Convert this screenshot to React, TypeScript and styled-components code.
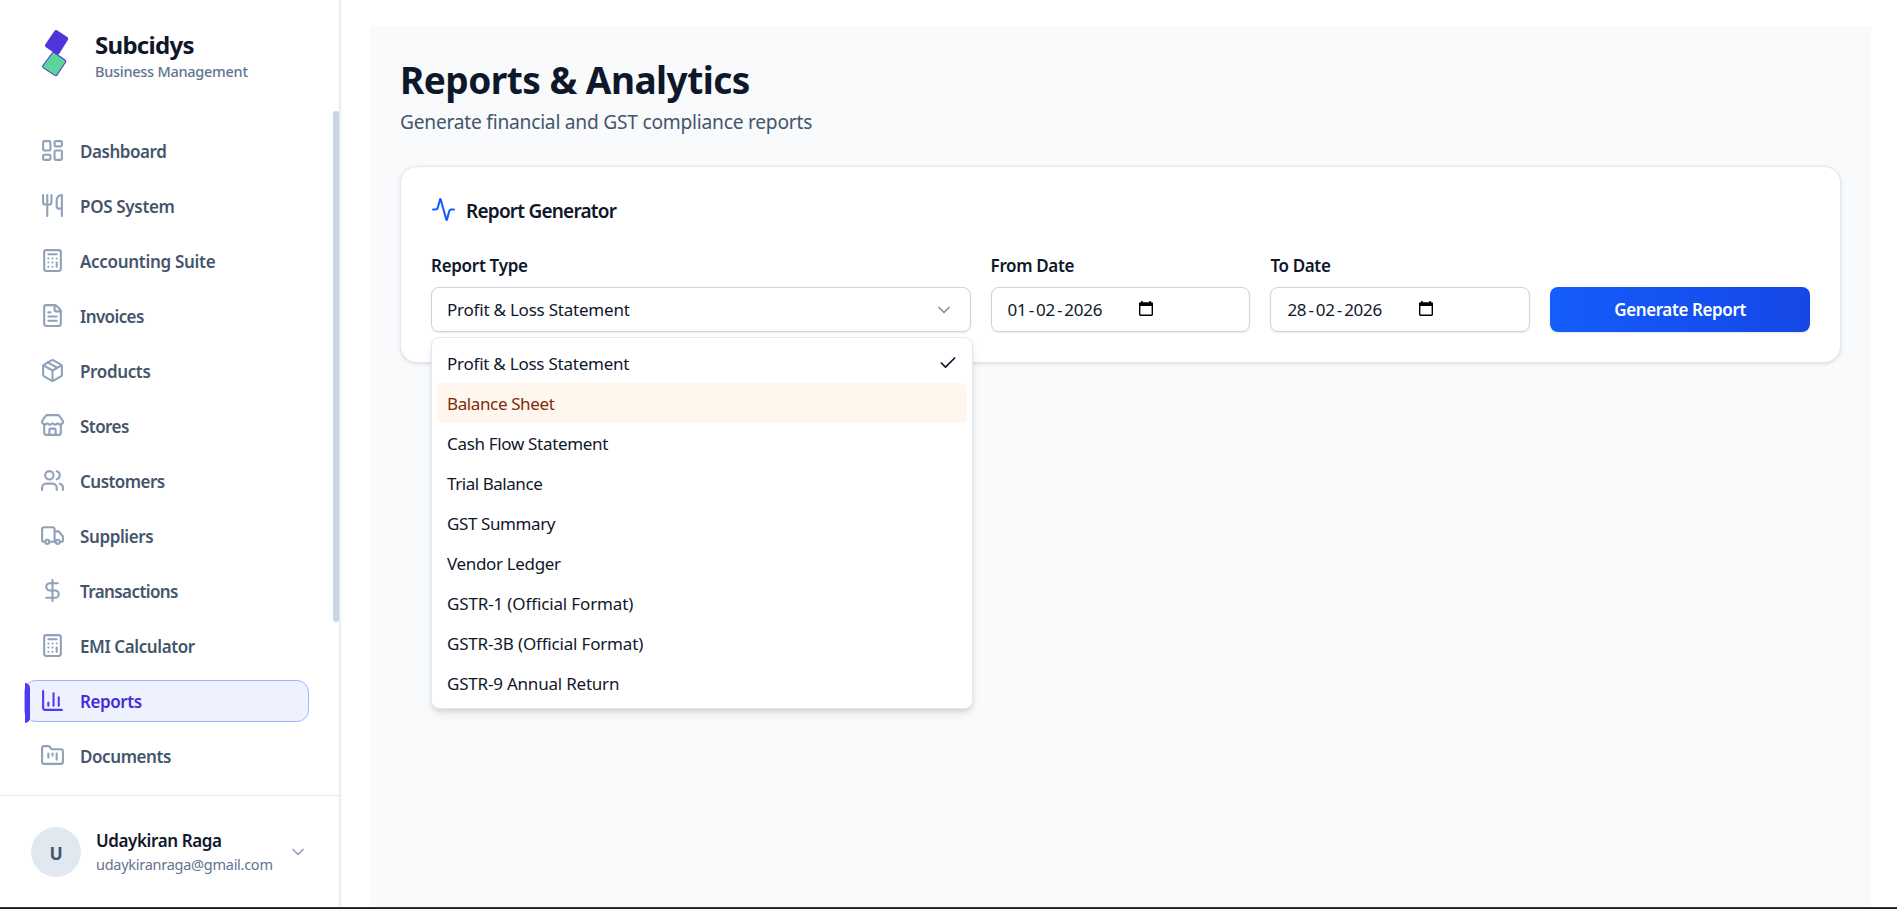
import React from 'react';
import styled, { createGlobalStyle, css } from 'styled-components';
import {
  Activity,
  Calculator,
  ChartColumn,
  Check,
  ChevronDown,
  DollarSign,
  FileText,
  FolderKanban,
  LayoutDashboard,
  Package,
  Store,
  Truck,
  Users,
  Utensils,
  type LucideIcon,
} from 'lucide-react';

const GlobalStyle = createGlobalStyle`
  *, *::before, *::after { box-sizing: border-box; }
  body {
    margin: 0;
    background: #fff;
    color: #0f172b;
    font-family: 'Noto Sans', 'Open Sans', sans-serif;
    overflow: hidden;
  }
  h1, h2, p { margin: 0; }
  button { font: inherit; }
`;

const Shell = styled.div`
  display: flex;
  flex-direction: column;
  height: 909px;
`;

const Body = styled.div`
  display: flex;
  flex: 1;
  min-height: 0;
`;

const BottomEdge = styled.div`
  height: 2px;
  background: #1b1a1f;
  border-top: 1px solid #38373c;
`;

/* Sidebar */

const Sidebar = styled.aside`
  width: 340px;
  flex: none;
  display: flex;
  flex-direction: column;
  background: #fff;
  border-right: 1px solid #e2e8f0;
  box-shadow: 0 1px 3px rgba(0, 0, 0, 0.12);
`;

const Brand = styled.header`
  display: flex;
  gap: 15px;
  height: 111px;
  padding: 28px 30px 0;
`;

const BrandName = styled.div`
  font-size: 24px;
  font-weight: 700;
  line-height: 33px;
  letter-spacing: -0.72px;
`;

const BrandTag = styled.div`
  font-size: 14.5px;
  font-weight: 540;
  line-height: 21px;
  letter-spacing: -0.27px;
  color: #62748e;
`;

const NavScroller = styled.div`
  display: flex;
  flex: 1;
  min-height: 0;
  justify-content: space-between;
`;

const Nav = styled.nav`
  display: flex;
  flex-direction: column;
  gap: 13px;
  width: 333px;
  padding: 19px 24px 0;
`;

const ScrollThumb = styled.div`
  width: 6px;
  height: 511px;
  border-radius: 3px;
  background: #cad5e2;
`;

const NavItem = styled.a<{ $active?: boolean }>`
  position: relative;
  display: flex;
  gap: 15px;
  height: 42px;
  padding: 7px 15px 0;
  border: 1px solid transparent;
  border-radius: 12px;
  color: #45556c;

  svg { color: #90a1b9; }

  ${(p) =>
    p.$active &&
    css`
      background: #eef2ff;
      border-color: #a3b3ff;
      color: #432dd7;

      svg { color: #4f39f6; }

      &::before {
        content: '';
        position: absolute;
        left: 0;
        top: 2px;
        width: 5px;
        height: 40px;
        border-radius: 0 5px 5px 0;
        background: #4f39f6;
      }
    `}
`;

const NavText = styled.span<{ $track: number }>`
  font-size: 17px;
  font-weight: 560;
  line-height: 27px;
  letter-spacing: ${(p) => p.$track - 0.16}px;
  white-space: nowrap;
`;

const Account = styled.footer`
  display: flex;
  align-items: center;
  height: 112px;
  padding: 1px 31px 0;
  border-top: 1px solid #e2e8f0;
`;

const Avatar = styled.div`
  display: flex;
  align-items: center;
  justify-content: center;
  width: 50px;
  height: 50px;
  padding-top: 2px;
  margin-right: 15px;
  border-radius: 50%;
  background: #e2e8f0;
  color: #45556c;
  font-size: 17.5px;
  font-weight: 700;
`;

const AccountText = styled.div`
  flex: 1;
  min-width: 0;
  white-space: nowrap;
`;

const AccountName = styled.div`
  font-size: 17px;
  font-weight: 560;
  line-height: 24px;
  letter-spacing: -0.4px;
`;

const AccountMail = styled.div`
  font-size: 14.5px;
  line-height: 22px;
  letter-spacing: -0.27px;
  color: #62748e;
`;

/* Main */

const Main = styled.main`
  flex: 1;
  margin: 26px 26px 0 30px;
  padding: 31px 30px 0;
  background: #f8fafc;
`;

const Title = styled.h1`
  font-size: 37px;
  font-weight: 700;
  line-height: 45px;
  letter-spacing: -0.52px;
`;

const Subtitle = styled.p`
  margin-top: 5px;
  font-size: 19.2px;
  line-height: 29px;
  letter-spacing: -0.24px;
  color: #45556c;
`;

const Card = styled.section`
  margin-top: 30px;
  height: 197px;
  padding: 30px;
  background: #fff;
  border: 1px solid #e2e8f0;
  border-radius: 17px;
  box-shadow: 0 1px 4px rgba(15, 23, 43, 0.1), 0 1px 2px -1px rgba(15, 23, 43, 0.1);
`;

const CardTitle = styled.h2`
  display: flex;
  gap: 10px;
  height: 25px;
  font-size: 19px;
  font-weight: 560;
  line-height: 28px;
  letter-spacing: -0.78px;

  svg { color: #155dfc; }
`;

const Form = styled.div`
  display: grid;
  grid-template-columns: repeat(5, 1fr);
  gap: 20px;
  align-items: end;
  margin-top: 34px;
`;

const Field = styled.div<{ $span?: number }>`
  position: relative;
  grid-column: span ${(p) => p.$span ?? 1};
`;

const Label = styled.div<{ $track: number }>`
  margin-bottom: 11px;
  font-size: 17px;
  font-weight: 560;
  line-height: 20px;
  letter-spacing: ${(p) => p.$track - 0.16}px;
`;

const Control = styled.div`
  display: flex;
  align-items: center;
  height: 45px;
  padding: 0 16px 0 15px;
  border: 1px solid #cad5e2;
  border-radius: 8px;
  background: #fff;
  box-shadow: 0 1px 2px rgba(0, 0, 0, 0.08);
  font-size: 17px;
  letter-spacing: -0.22px;

  > svg { margin-left: auto; color: #878e9c; }
`;

const DateControl = styled(Control)`
  padding-left: 16px;
  letter-spacing: -0.25px;

  > svg { margin: -2px 0 0 37px; color: #000; }
`;

const Dash = styled.span`
  margin: 0 2.1px;
`;

const Menu = styled.ul`
  position: absolute;
  top: 81px;
  left: 0;
  z-index: 2;
  width: 542px;
  margin: 0;
  padding: 5px;
  list-style: none;
  background: #fff;
  border: 1px solid #e2e8f0;
  border-radius: 8px;
  box-shadow: 0 5px 8px -1px rgba(0, 0, 0, 0.1), 0 3px 5px -2px rgba(0, 0, 0, 0.1);
`;

const Option = styled.li<{ $track: number; $highlighted: boolean }>`
  display: flex;
  align-items: center;
  justify-content: space-between;
  height: 40px;
  padding: 1px 9px 0 10px;
  border-radius: 5px;
  font-size: 17px;
  letter-spacing: ${(p) => p.$track - 0.04}px;
  color: ${(p) => (p.$highlighted ? '#7e2a0c' : '#0f172b')};
  background: ${(p) => (p.$highlighted ? '#fff7ed' : 'transparent')};

  svg { margin-top: -2px; }
`;

const PrimaryButton = styled.button`
  width: 100%;
  height: 45px;
  padding: 0;
  border: 0;
  border-radius: 8px;
  background: linear-gradient(to right, #155dfc, #1447e6);
  box-shadow: 0 1px 2px rgba(0, 0, 0, 0.1);
  color: #fff;
  font-size: 17px;
  font-weight: 560;
  letter-spacing: -0.39px;
`;

type NavEntry = { label: string; icon: LucideIcon; track: number; active?: boolean };

const navEntries: NavEntry[] = [
  { label: 'Dashboard', icon: LayoutDashboard, track: -0.29 },
  { label: 'POS System', icon: Utensils, track: -0.16 },
  { label: 'Accounting Suite', icon: Calculator, track: -0.14 },
  { label: 'Invoices', icon: FileText, track: -0.45 },
  { label: 'Products', icon: Package, track: -0.2 },
  { label: 'Stores', icon: Store, track: -0.4 },
  { label: 'Customers', icon: Users, track: -0.37 },
  { label: 'Suppliers', icon: Truck, track: -0.24 },
  { label: 'Transactions', icon: DollarSign, track: -0.43 },
  { label: 'EMI Calculator', icon: Calculator, track: -0.25 },
  { label: 'Reports', icon: ChartColumn, track: -0.25, active: true },
  { label: 'Documents', icon: FolderKanban, track: -0.26 },
];

const reportTypes = [
  { label: 'Profit & Loss Statement', track: -0.2 },
  { label: 'Balance Sheet', track: -0.34 },
  { label: 'Cash Flow Statement', track: -0.28 },
  { label: 'Trial Balance', track: -0.41 },
  { label: 'GST Summary', track: -0.36 },
  { label: 'Vendor Ledger', track: -0.3 },
  { label: 'GSTR-1 (Official Format)', track: -0.1 },
  { label: 'GSTR-3B (Official Format)', track: -0.14 },
  { label: 'GSTR-9 Annual Return', track: -0.17 },
];

const Logo = () => (
  <svg width="50" height="54" viewBox="0 0 50 54" strokeLinejoin="round">
    <path d="M26.2 4.2 36 10.9 27.4 24.5 17.2 17.4Z" fill="#4f35d8" stroke="#4f35d8" strokeWidth="4.4" />
    <path d="M23.4 26.2 34.1 33.3 25.7 46 14.3 38.5Z" fill="#5ad69b" stroke="#4b3fcb" strokeWidth="4.4" />
    <path d="M23.4 26.2 34.1 33.3 25.7 46 14.3 38.5Z" fill="#5ad69b" stroke="#5ad69b" strokeWidth="2.2" />
  </svg>
);

const CalendarGlyph = () => (
  <svg width="14" height="15" viewBox="0 0 14 15">
    <path
      fill="currentColor"
      fillRule="evenodd"
      d="M2.2 0h1.5v1.2h6.6V0h1.5v1.2h.8c.8 0 1.4.6 1.4 1.4v11c0 .8-.6 1.4-1.4 1.4H1.4C.6 15 0 14.4 0 13.6v-11c0-.8.6-1.4 1.4-1.4h.8V0ZM1.4 5v8.6h11.2V5H1.4Z"
    />
  </svg>
);

const DateField = ({ label, track, parts }: { label: string; track: number; parts: [string, string, string] }) => (
  <Field>
    <Label $track={track}>{label}</Label>
    <DateControl>
      <span>{parts[0]}</span>
      <Dash>-</Dash>
      <span>{parts[1]}</span>
      <Dash>-</Dash>
      <span>{parts[2]}</span>
      <CalendarGlyph />
    </DateControl>
  </Field>
);

export default function App() {
  return (
    <Shell>
      <GlobalStyle />
      <Body>
        <Sidebar>
          <Brand>
            <Logo />
            <div>
              <BrandName>Subcidys</BrandName>
              <BrandTag>Business Management</BrandTag>
            </div>
          </Brand>
          <NavScroller>
            <Nav>
              {navEntries.map(({ label, icon: Icon, track, active }) => (
                <NavItem key={label} $active={active}>
                  <Icon size={25} />
                  <NavText $track={track}>{label}</NavText>
                </NavItem>
              ))}
            </Nav>
            <ScrollThumb />
          </NavScroller>
          <Account>
            <Avatar>U</Avatar>
            <AccountText>
              <AccountName>Udaykiran Raga</AccountName>
              <AccountMail>udaykiranraga@gmail.com</AccountMail>
            </AccountText>
            <ChevronDown size={20} color="#90a1b9" />
          </Account>
        </Sidebar>
        <Main>
          <Title>Reports &amp; Analytics</Title>
          <Subtitle>Generate financial and GST compliance reports</Subtitle>
          <Card>
            <CardTitle>
              <Activity size={25} />
              Report Generator
            </CardTitle>
            <Form>
              <Field $span={2}>
                <Label $track={-0.14}>Report Type</Label>
                <Control>
                  Profit &amp; Loss Statement
                  <ChevronDown size={20} />
                </Control>
                <Menu>
                  {reportTypes.map(({ label, track }, i) => (
                    <Option key={label} $track={track} $highlighted={i === 1}>
                      {label}
                      {i === 0 && <Check size={20} />}
                    </Option>
                  ))}
                </Menu>
              </Field>
              <DateField label="From Date" track={-0.2} parts={['01', '02', '2026']} />
              <DateField label="To Date" track={-0.2} parts={['28', '02', '2026']} />
              <PrimaryButton>Generate Report</PrimaryButton>
            </Form>
          </Card>
        </Main>
      </Body>
      <BottomEdge />
    </Shell>
  );
}
